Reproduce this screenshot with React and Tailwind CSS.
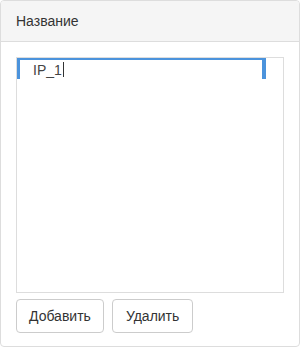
export default function App() {
  return (
    <div className="w-[300px] h-[347px] bg-white" style={{ fontFamily: '"Liberation Sans", Arial, sans-serif' }}>
      <div className="w-[300px] h-[347px] border border-[#dddddd] rounded-[4px] overflow-hidden flex flex-col text-[#333333] text-[14px]">
        {/* header */}
        <div className="h-[41px] shrink-0 bg-[#f5f5f5] border-b border-[#dddddd] px-[15px] flex items-center leading-[20px]">
          Название
        </div>
        {/* body */}
        <div className="flex flex-col px-[15px] pt-[15px]">
          <div className="h-[236px] border border-[#dddddd] bg-white flex flex-col">
            <div className="w-[249px] h-[21px] flex">
              <div className="w-[249px] h-[21px] border-t-2 border-l-[3px] border-r-[4px] border-[#4b93dc] flex items-center pl-[13px] leading-[16px] text-[#444444]">
                <span>IP_1</span>
                <span className="ml-[1px] w-px h-[15px] bg-[#333333]"></span>
              </div>
            </div>
          </div>
          <div className="flex gap-[8px] mt-[6px]">
            <button className="h-[34px] px-[12px] border border-[#cccccc] rounded-[4px] bg-white text-[#333333] text-[14px] leading-[20px]">
              Добавить
            </button>
            <button className="h-[34px] px-[13px] border border-[#cccccc] rounded-[4px] bg-white text-[#333333] text-[14px] leading-[20px]">
              Удалить
            </button>
          </div>
        </div>
      </div>
    </div>
  )
}
